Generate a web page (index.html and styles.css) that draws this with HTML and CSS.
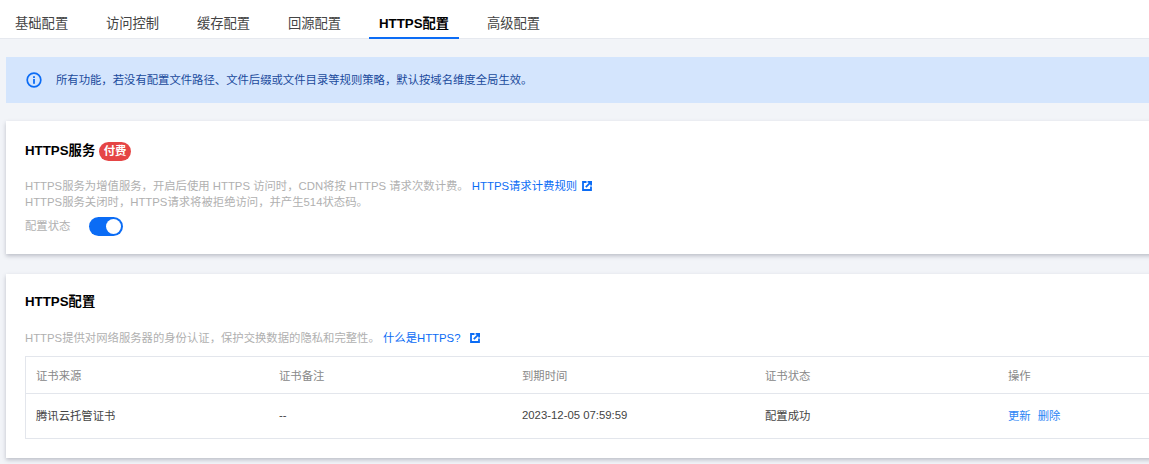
FILE: index.html
```html
<!DOCTYPE html>
<html lang="zh">
<head>
<meta charset="utf-8">
<title>HTTPS配置</title>
<link rel="stylesheet" href="styles.css">
</head>
<body>
<nav class="tabs">
  <a class="tab">基础配置</a>
  <a class="tab">访问控制</a>
  <a class="tab">缓存配置</a>
  <a class="tab">回源配置</a>
  <a class="tab active">HTTPS配置</a>
  <a class="tab">高级配置</a>
</nav>
<main class="content">
  <div class="alert">
    <svg class="info" width="16" height="16" viewBox="0 0 16 16"><circle cx="8" cy="8" r="6.8" fill="none" stroke="#0b6cf5" stroke-width="1.7"/><rect x="7.1" y="7" width="1.8" height="4.8" fill="#0b6cf5"/><rect x="7.1" y="4.2" width="1.8" height="1.8" fill="#0b6cf5"/></svg>
    <span class="alert-text">所有功能，若没有配置文件路径、文件后缀或文件目录等规则策略，默认按域名维度全局生效。</span>
  </div>
  <section class="card card-service">
    <h2 class="title">HTTPS服务<span class="badge">付费</span></h2>
    <p class="desc first">HTTPS服务为增值服务，开启后使用 HTTPS 访问时，CDN将按 HTTPS 请求次数计费。 <a class="link">HTTPS请求计费规则<svg class="ext" width="10" height="10" viewBox="0 0 10 10"><path d="M4.5 1H1v8h8V5.5" fill="none" stroke="#0b6cf5" stroke-width="1.8"/><path d="M3.8 6.2 8.6 1.4M5.6 .9H9.1v3.5" fill="none" stroke="#0b6cf5" stroke-width="1.8"/></svg></a></p>
    <p class="desc">HTTPS服务关闭时，HTTPS请求将被拒绝访问，并产生514状态码。</p>
    <div class="status">
      <span class="status-label">配置状态</span>
      <span class="switch"><span class="knob"></span></span>
    </div>
  </section>
  <section class="card card-config">
    <h2 class="title">HTTPS配置</h2>
    <p class="desc intro">HTTPS提供对网络服务器的身份认证，保护交换数据的隐私和完整性。 <a class="link">什么是HTTPS?<svg class="ext far" width="10" height="10" viewBox="0 0 10 10"><path d="M4.5 1H1v8h8V5.5" fill="none" stroke="#0b6cf5" stroke-width="1.8"/><path d="M3.8 6.2 8.6 1.4M5.6 .9H9.1v3.5" fill="none" stroke="#0b6cf5" stroke-width="1.8"/></svg></a></p>
    <div class="table">
      <div class="row head">
        <span>证书来源</span><span>证书备注</span><span>到期时间</span><span>证书状态</span><span>操作</span>
      </div>
      <div class="row body-row">
        <span>腾讯云托管证书</span><span>--</span><span>2023-12-05 07:59:59</span><span>配置成功</span>
        <span class="actions"><a class="link soft">更新</a><a class="link soft">删除</a></span>
      </div>
    </div>
  </section>
</main>
</body>
</html>
```
FILE: styles.css
```css
* { box-sizing: border-box; }
html, body { margin: 0; height: 464px; overflow: hidden; }
body {
  width: 1149px;
  background: #f2f4f8;
  font-family: "Liberation Sans", "Noto Sans CJK SC", sans-serif;
  font-size: 11.35px;
  color: #333;
}
.tabs {
  display: flex;
  height: 39px;
  padding-left: 5px;
  background: #fff;
  border-bottom: 1px solid #e6e9ef;
}
.tab {
  height: 39px;
  padding: 15px 10px 0;
  margin-right: 17.8px;
  font-size: 13.3px;
  line-height: 18px;
  color: #444;
  white-space: nowrap;
}
.tab.active {
  color: #000;
  font-weight: 700;
  border-bottom: 2px solid #0b6cf5;
}
.content { padding: 18px 0 0 6px; width: 1200px; }
.alert {
  display: flex;
  align-items: center;
  gap: 14px;
  height: 46px;
  padding-left: 20px;
  padding-bottom: 1px;
  background: #d4e5fd;
  color: #1a4a9c;
}
.alert-text { position: relative; top: -1px; }
.card {
  background: #fff;
  padding: 0 19px;
  box-shadow: 0 2px 4px rgba(54, 58, 80, .28);
}
.card-service { height: 133px; margin-top: 18px; padding-top: 20px; }
.card-config { height: 184px; margin-top: 20px; padding-top: 18px; }
.title {
  margin: 0;
  height: 20px;
  display: flex;
  align-items: center;
  font-size: 13.3px;
  line-height: 20px;
  font-weight: 700;
  color: #000;
}
.badge {
  margin-left: 4px;
  padding: 0 4.5px;
  height: 19px;
  border-radius: 9.5px;
  background: #e54545;
  color: #fff;
  font-size: 11.4px;
  line-height: 19px;
}
.desc { margin: 0; line-height: 16px; color: #b0b0b0; white-space: nowrap; }
.desc.first { margin-top: 17px; }
.desc.intro { margin-top: 18px; }
.link { color: #0b6cf5; }
.link.soft { color: #2b85f5; }
.ext { margin-left: 5px; vertical-align: -1px; }
.ext.far { margin-left: 9px; }
.status { display: flex; align-items: center; height: 20px; margin-top: 6px; color: #b0b0b0; }
.status-label { width: 64px; padding-bottom: 2px; }
.switch {
  display: flex;
  justify-content: flex-end;
  align-items: center;
  width: 34px;
  height: 19px;
  padding-right: 2px;
  border-radius: 9.5px;
  background: #0b6cf5;
}
.knob { width: 15px; height: 15px; border-radius: 50%; background: #fff; }
.table { margin-top: 10px; border: 1px solid #e3e6ec; width: 1180px; }
.row {
  display: grid;
  grid-template-columns: 243px 243px 243px 243px 1fr;
  padding-left: 10px;
  align-items: center;
}
.head { height: 37px; padding-bottom: 1px; color: #888; border-bottom: 1px solid #e3e6ec; }
.body-row { height: 44px; padding-bottom: 3px; color: #444; }
.actions { display: flex; gap: 7px; }
```
